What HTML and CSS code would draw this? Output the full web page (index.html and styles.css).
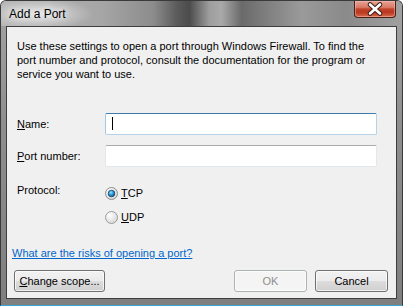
FILE: index.html
```html
<!DOCTYPE html>
<html lang="en">
<head>
    <meta charset="UTF-8">
    <meta name="viewport" content="width=device-width, initial-scale=1.0">
    <title>Add a Port</title>
    <link rel="stylesheet" href="styles.css">
</head>
<body>
    <div class="window">
        <div class="titlebar">
            <span class="title">Add a Port</span>
            <div class="close-btn">
                <svg width="40" height="16" viewBox="0 0 40 16">
                    <path d="M15 3.5 L25 12.5 M25 3.5 L15 12.5" stroke="#3b1d16" stroke-width="4.6" stroke-linecap="round"/>
                    <path d="M15 3.5 L25 12.5 M25 3.5 L15 12.5" stroke="#ffffff" stroke-width="2.6" stroke-linecap="round"/>
                </svg>
            </div>
        </div>

        <div class="client">
            <p class="intro">Use these settings to open a port through Windows Firewall. To find the<br>port number and protocol, consult the documentation for the program or<br>service you want to use.</p>

            <div class="form">
                <label class="field-label"><u>N</u>ame:</label>
                <div class="textbox focused"><span class="caret"></span></div>

                <label class="field-label"><u>P</u>ort number:</label>
                <div class="textbox"></div>

                <label class="field-label protocol-label">Protocol:</label>
                <div class="radio-group">
                    <div class="radio">
                        <svg width="13" height="13" viewBox="0 0 13 13">
                            <defs>
                                <radialGradient id="ring" cx="0.35" cy="0.3" r="0.8">
                                    <stop offset="0" stop-color="#ffffff"/>
                                    <stop offset="1" stop-color="#d4d4d4"/>
                                </radialGradient>
                                <radialGradient id="dot" cx="0.4" cy="0.35" r="0.7">
                                    <stop offset="0" stop-color="#8fe0ff"/>
                                    <stop offset="0.6" stop-color="#1f8ccc"/>
                                    <stop offset="1" stop-color="#0d4f80"/>
                                </radialGradient>
                            </defs>
                            <circle cx="6.5" cy="6.5" r="6" fill="url(#ring)" stroke="#8a8c8e"/>
                            <circle cx="6.5" cy="6.5" r="3.3" fill="url(#dot)" stroke="#1a3e5c" stroke-width="0.8"/>
                        </svg>
                        <span><u>T</u>CP</span>
                    </div>
                    <div class="radio">
                        <svg width="13" height="13" viewBox="0 0 13 13">
                            <circle cx="6.5" cy="6.5" r="6" fill="url(#ring)" stroke="#9a9c9e"/>
                        </svg>
                        <span><u>U</u>DP</span>
                    </div>
                </div>
            </div>

            <a class="help-link" href="#">What are the risks of opening a port?</a>

            <div class="buttons">
                <button class="btn scope-btn"><u>C</u>hange scope...</button>
                <button class="btn" disabled>OK</button>
                <button class="btn">Cancel</button>
            </div>
        </div>
    </div>
</body>
</html>
```

FILE: styles.css
```css
html, body {
    margin: 0;
    padding: 0;
    background-color: #ffffff;
}
body {
    width: 403px;
    height: 306px;
    overflow: hidden;
    font-family: "Liberation Sans", Arial, sans-serif;
    font-size: 11px;
    color: #000;
}
.window {
    box-sizing: border-box;
    width: 403px;
    height: 306px;
    display: flex;
    flex-direction: column;
    border: 1px solid #3a3a3a;
    border-bottom-color: #35a8d8;
    border-radius: 6px 6px 0 0;
    background: linear-gradient(to bottom, #a4a4a4 0%, #8e8e8e 40%, #7f7f7f 100%);
}
.titlebar {
    height: 25px;
    display: flex;
    align-items: center;
    padding: 0 6px 0 7px;
    border-radius: 5px 5px 0 0;
    background:
        radial-gradient(ellipse 55px 16px at 38px 13px, rgba(255, 255, 255, 0.65), rgba(255, 255, 255, 0) 100%),
        linear-gradient(to right, #b4b4b4 0%, #a6a6a6 25%, #8c8c8c 38%, #5a5a5a 44%, #4c4c4c 47%, #9e9e9e 52%, #a9a9a9 55%, #6a6a6a 60%, #7e7e7e 66%, #9a9a9a 75%, #8a8a8a 86%, #a0a0a0 100%);
}
.title {
    font-size: 12px;
    color: #000;
    padding-left: 1px;
    text-shadow: 0 0 6px rgba(255, 255, 255, 0.9), 0 0 10px rgba(255, 255, 255, 0.7);
}
.close-btn {
    margin-left: auto;
    align-self: flex-start;
    box-sizing: border-box;
    width: 42px;
    height: 17px;
    border: 1px solid #4a2119;
    border-top: none;
    border-radius: 0 0 4px 4px;
    background: linear-gradient(to bottom, #e7a496 0%, #d87966 40%, #c0432c 50%, #b8361f 70%, #d86a4d 100%);
    box-shadow: inset 0 0 0 1px rgba(255, 200, 190, 0.45);
}
.close-btn svg {
    display: block;
}
.client {
    flex: 1;
    margin: 0 5px 6px 5px;
    padding: 12px 8px 0 0;
    border: 1px solid #3e3e3e;
    background-color: #f0f0f0;
    display: flex;
    flex-direction: column;
}
.intro {
    margin: 0 0 0 10px;
    line-height: 14px;
}
.form {
    margin: 32px 0 0 10px;
    display: grid;
    grid-template-columns: 88px 272px;
    row-gap: 10px;
}
.field-label {
    align-self: center;
    line-height: 14px;
}
.protocol-label {
    align-self: start;
    margin-top: 6px;
}
.textbox {
    box-sizing: border-box;
    height: 22px;
    background-color: #fff;
    border: 1px solid #e2e7ec;
    border-top-color: #ababab;
    border-radius: 2px;
    position: relative;
}
.textbox.focused {
    border-color: #b4d3ea;
    border-top-color: #3d7bad;
    border-left-color: #a4c8e4;
}
.caret {
    position: absolute;
    left: 6px;
    top: 3px;
    width: 1px;
    height: 13px;
    background-color: #000;
}
.radio-group {
    margin-top: 6px;
    padding-top: 3px;
    display: flex;
    flex-direction: column;
    gap: 10px;
}
.radio {
    height: 14px;
    display: flex;
    align-items: center;
    gap: 3px;
}
.radio svg {
    display: block;
}
.help-link {
    align-self: flex-start;
    margin: 22px 0 0 5px;
    line-height: 14px;
    color: #0066cc;
    text-decoration: underline;
}
.buttons {
    margin: 10px 0 0 7px;
    display: flex;
    gap: 8px;
}
.btn {
    box-sizing: border-box;
    height: 22px;
    width: 73px;
    padding: 0;
    font-family: "Liberation Sans", Arial, sans-serif;
    font-size: 11px;
    color: #000;
    border: 1px solid #707070;
    border-radius: 3px;
    background: linear-gradient(to bottom, #f2f2f2 0%, #ebebeb 49%, #dddddd 50%, #cfcfcf 100%);
    box-shadow: inset 0 0 0 1px rgba(255, 255, 255, 0.7);
}
.btn:disabled {
    color: #8f8f8f;
    border-color: #adb2b5;
    background: #f4f4f4;
}
.scope-btn {
    width: 91px;
    margin-right: auto;
}
```
